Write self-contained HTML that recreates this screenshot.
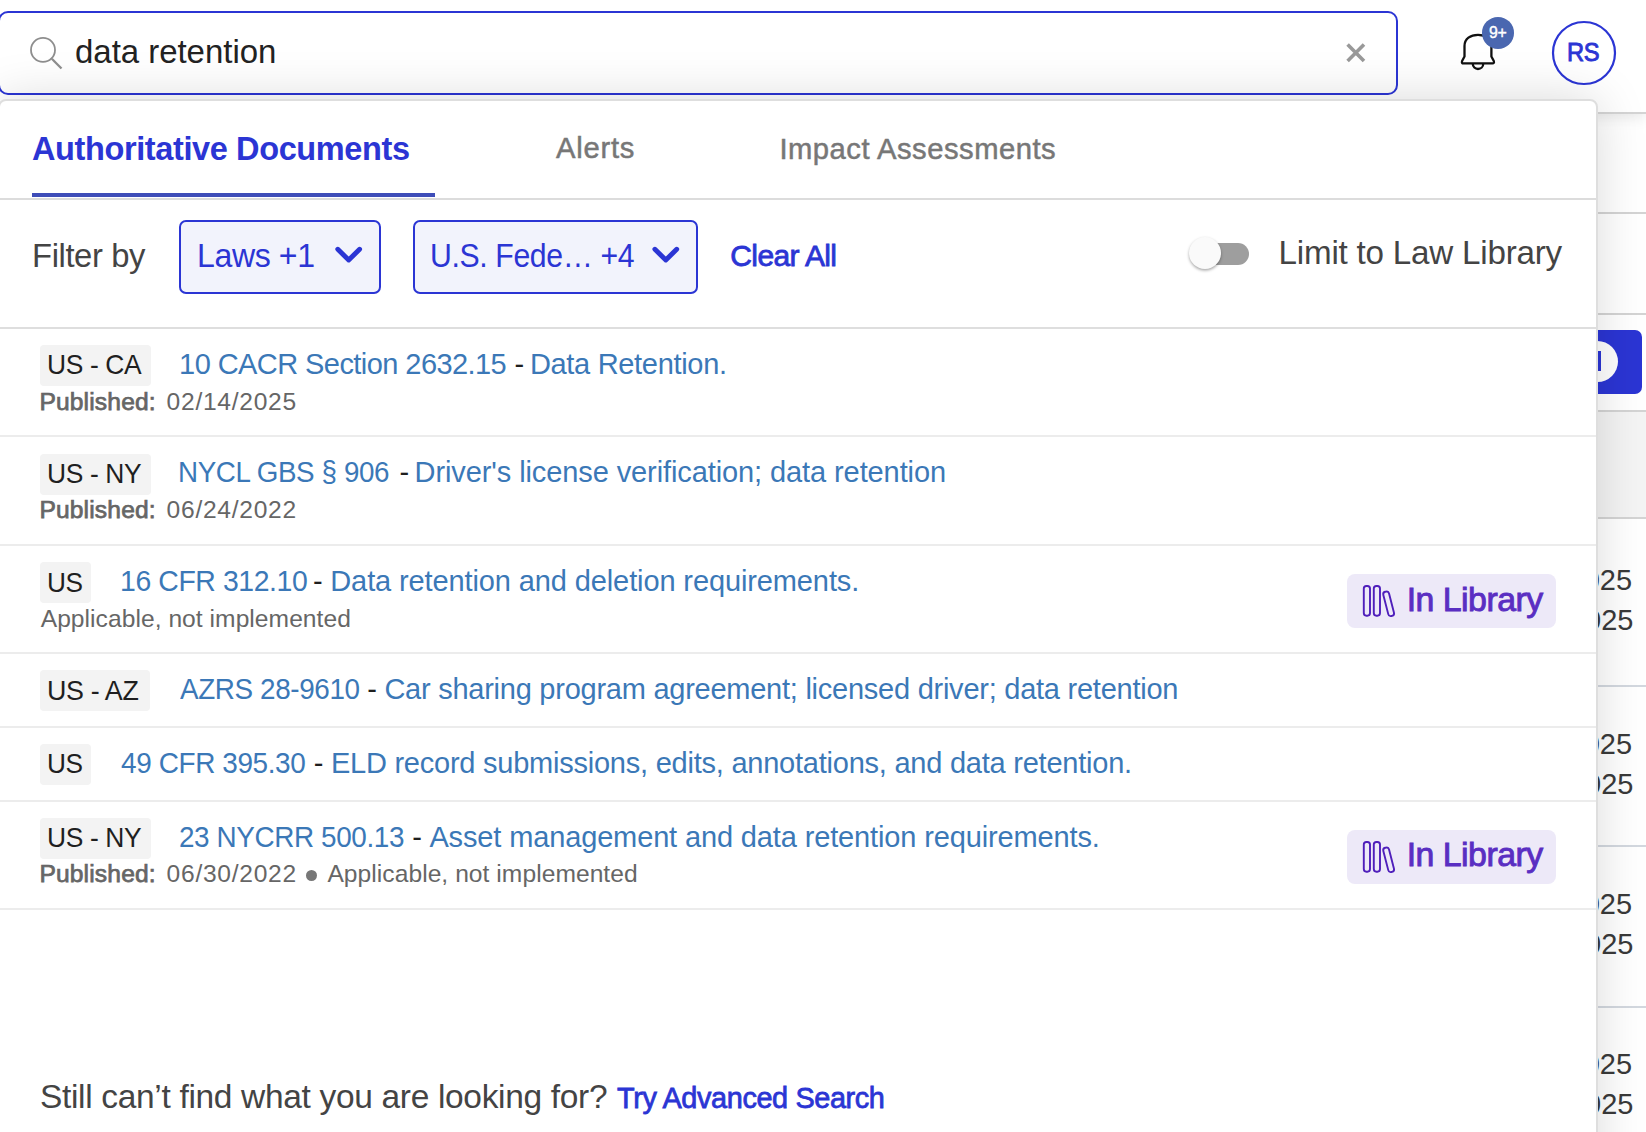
<!DOCTYPE html>
<html><head><meta charset="utf-8">
<style>
html,body{margin:0;padding:0;}
body{width:1646px;height:1132px;position:relative;overflow:hidden;background:#fff;font-family:"Liberation Sans",sans-serif;}
.a{position:absolute;}
.t{position:absolute;white-space:nowrap;line-height:1;}
.hdr{position:absolute;left:0;top:0;width:1646px;height:112px;background:#fff;border-bottom:2px solid #d3d3d3;box-shadow:0 3px 14px rgba(0,0,0,0.10);}
.search{position:absolute;left:-2.4px;top:11px;width:1395.9px;height:80px;border:2px solid #2b35d4;border-radius:10px;background:transparent;}
.page{position:absolute;left:1597px;top:114px;width:49px;height:1018px;background:#fff;}
.pline{position:absolute;left:1597px;width:49px;height:2px;background:#d4d4d4;}
.panel{position:absolute;left:-2px;top:99px;width:1600px;height:1100px;background:#fff;border:2px solid #dedede;border-radius:8px 8px 0 0;box-sizing:border-box;box-shadow:0 0 50px rgba(0,0,0,0.15);}
.hl{position:absolute;left:0;width:1596px;height:2px;background:#ececec;}
.tagbg{position:absolute;height:41px;background:#f3f3f3;border-radius:4px;}
.badge{position:absolute;left:1347px;width:209px;height:54px;background:#ede9f8;border-radius:8px;}
.dd{position:absolute;top:220.3px;height:73.5px;border:2px solid #2b35d4;border-radius:7px;background:#f2f3fc;box-sizing:border-box;}
</style></head><body>
<div class="page"></div>
<div class="hdr"></div>
<div class="pline" style="top:112px"></div>
<div class="pline" style="top:212px"></div>
<div class="pline" style="top:312.5px"></div>
<div class="a" style="left:1597px;top:411px;width:49px;height:106px;background:#f4f4f4;"></div>
<div class="pline" style="top:410px"></div>
<div class="pline" style="top:516.5px"></div>
<div class="pline" style="top:685px;background:#d3d8df"></div>
<div class="pline" style="top:845px;background:#d3d8df"></div>
<div class="pline" style="top:1005.5px;background:#d3d8df"></div>
<div class="a" style="left:1560px;top:330px;width:82px;height:64px;background:#2b35d4;border-radius:7px;"></div>
<div class="a" style="left:1577px;top:341px;width:41px;height:41px;background:#fff;border-radius:50%;"></div>
<div class="a" style="left:1598px;top:351px;width:3px;height:20px;background:#2b35d4;"></div>
<div class="t" style="left:1567.61px;top:565.85px;font-size:29px;color:#3a3a3a;">2025</div>
<div class="t" style="left:1568.91px;top:605.75px;font-size:29px;color:#3a3a3a;">2025</div>
<div class="t" style="left:1567.61px;top:730.45px;font-size:29px;color:#3a3a3a;">2025</div>
<div class="t" style="left:1568.91px;top:770.45px;font-size:29px;color:#3a3a3a;">2025</div>
<div class="t" style="left:1567.61px;top:890.45px;font-size:29px;color:#3a3a3a;">2025</div>
<div class="t" style="left:1568.91px;top:930.45px;font-size:29px;color:#3a3a3a;">2025</div>
<div class="t" style="left:1567.61px;top:1050.45px;font-size:29px;color:#3a3a3a;">2025</div>
<div class="t" style="left:1568.91px;top:1090.45px;font-size:29px;color:#3a3a3a;">2025</div>
<div class="search"></div>
<svg class="a" style="left:0;top:0" width="1646" height="113" viewBox="0 0 1646 113">
 <circle cx="43" cy="49.9" r="12" fill="none" stroke="#8e8e8e" stroke-width="1.8"/>
 <line x1="51.8" y1="58.8" x2="61.5" y2="68.5" stroke="#8e8e8e" stroke-width="2.3"/>
 <path d="M1347.6,44.6 L1364,61 M1364,44.6 L1347.6,61" stroke="#999" stroke-width="3.6"/>
 <path d="M1464.5,56.5 L1464.5,46 C1464.5,38.5 1470.5,34.8 1478,34.8 C1485.5,34.8 1491.4,38.5 1491.4,46 L1491.4,56.5 L1493.8,61 Q1494.6,63.4 1492.5,63.4 L1463.5,63.4 Q1461.3,63.4 1462.1,61 Z" fill="none" stroke="#111" stroke-width="2.3" stroke-linejoin="round"/>
 <path d="M1472.8,64 A5.2,5 0 0 0 1483.2,64" fill="none" stroke="#111" stroke-width="2.3"/>
 <circle cx="1498" cy="32.9" r="16" fill="#4a67b0"/>
 <circle cx="1584" cy="53" r="31" fill="none" stroke="#2b35d4" stroke-width="2.2"/>
</svg>
<div class="panel"></div>
<div class="a" style="left:32px;top:193px;width:403px;height:4px;background:#3e4db8;"></div>
<div class="hl" style="top:197.5px;background:#dcdcdc;"></div>
<div class="dd" style="left:179px;width:202px;"></div>
<div class="dd" style="left:413px;width:285px;"></div>
<svg class="a" style="left:0;top:0" width="1646" height="330" viewBox="0 0 1646 330">
 <path d="M337.8,249.3 L348.7,260 L359.6,249.3" fill="none" stroke="#2b35d4" stroke-width="4.9" stroke-linecap="round" stroke-linejoin="round"/>
 <path d="M654.9,249.3 L665.8,260 L676.7,249.3" fill="none" stroke="#2b35d4" stroke-width="4.9" stroke-linecap="round" stroke-linejoin="round"/>
</svg>
<div class="a" style="left:1189.5px;top:243px;width:59.5px;height:22px;border-radius:11px;background:#9e9e9e;"></div>
<div class="a" style="left:1188.5px;top:236.5px;width:32.5px;height:32.5px;border-radius:50%;background:#fafafa;box-shadow:0 1.5px 3px rgba(0,0,0,0.35);"></div>
<div class="hl" style="top:327px;background:#dedede;"></div>
<div class="hl" style="top:435px;"></div>
<div class="hl" style="top:543.5px;"></div>
<div class="hl" style="top:652px;"></div>
<div class="hl" style="top:725.5px;"></div>
<div class="hl" style="top:799.5px;"></div>
<div class="hl" style="top:907.5px;"></div>
<div class="tagbg" style="left:40px;top:345px;width:111px"></div>
<div class="tagbg" style="left:40px;top:453.5px;width:111px"></div>
<div class="tagbg" style="left:40px;top:562px;width:50.599999999999994px"></div>
<div class="badge" style="top:574px"><svg class="a" style="left:0;top:0" width="60" height="54" viewBox="0 0 60 54"><g fill="none" stroke="#4f1fbb" stroke-width="1.9"><rect x="16.8" y="12" width="6.2" height="29.7" rx="2.6"/><rect x="26.8" y="12" width="6.2" height="29.7" rx="2.6"/><rect x="38.7" y="17.3" width="5.9" height="25" rx="2.6" transform="rotate(-14.4 41.65 29.8)"/></g></svg>
</div>
<div class="tagbg" style="left:40px;top:670px;width:110px"></div>
<div class="tagbg" style="left:40px;top:743.5px;width:50.599999999999994px"></div>
<div class="tagbg" style="left:40px;top:817.5px;width:111px"></div>
<div class="badge" style="top:829.5px"><svg class="a" style="left:0;top:0" width="60" height="54" viewBox="0 0 60 54"><g fill="none" stroke="#4f1fbb" stroke-width="1.9"><rect x="16.8" y="12" width="6.2" height="29.7" rx="2.6"/><rect x="26.8" y="12" width="6.2" height="29.7" rx="2.6"/><rect x="38.7" y="17.3" width="5.9" height="25" rx="2.6" transform="rotate(-14.4 41.65 29.8)"/></g></svg>
</div>
<div class="a" style="left:306px;top:870px;width:11px;height:11px;border-radius:50%;background:#777;"></div>
<div class="t" style="left:75.00px;top:34.97px;font-size:33px;font-weight:400;letter-spacing:-0.036px;color:#222;">data retention</div>
<div class="t" style="left:1489.20px;top:24.33px;font-size:16.5px;font-weight:400;letter-spacing:-0.400px;color:#fff;-webkit-text-stroke:0.4px #fff;transform:scaleX(0.9619);transform-origin:0 0;">9+</div>
<div class="t" style="left:1567.19px;top:38.92px;font-size:26.2px;font-weight:400;letter-spacing:-0.400px;color:#2b35d4;-webkit-text-stroke:0.9px #2b35d4;transform:scaleX(0.9042);transform-origin:0 0;">RS</div>
<div class="t" style="left:32.20px;top:132.20px;font-size:33.2px;font-weight:700;letter-spacing:-0.400px;color:#2b35d4;transform:scaleX(0.9799);transform-origin:0 0;">Authoritative Documents</div>
<div class="t" style="left:556.00px;top:134.38px;font-size:29.2px;font-weight:400;letter-spacing:0.757px;color:#777;-webkit-text-stroke:0.5px #777;">Alerts</div>
<div class="t" style="left:779.40px;top:134.58px;font-size:29.2px;font-weight:400;letter-spacing:0.508px;color:#777;-webkit-text-stroke:0.5px #777;">Impact Assessments</div>
<div class="t" style="left:32.00px;top:239.83px;font-size:32.8px;font-weight:400;letter-spacing:-0.404px;color:#444;">Filter by</div>
<div class="t" style="left:197.04px;top:239.83px;font-size:32.8px;font-weight:400;letter-spacing:-0.400px;color:#2b35d4;transform:scaleX(0.9776);transform-origin:0 0;">Laws +1</div>
<div class="t" style="left:430.16px;top:239.83px;font-size:32.8px;font-weight:400;letter-spacing:-0.400px;color:#2b35d4;transform:scaleX(0.9213);transform-origin:0 0;">U.S. Fede… +4</div>
<div class="t" style="left:730.30px;top:241.21px;font-size:30px;font-weight:400;letter-spacing:-0.625px;color:#2b35d4;-webkit-text-stroke:0.8px #2b35d4;">Clear All</div>
<div class="t" style="left:1278.60px;top:235.60px;font-size:33.2px;font-weight:400;letter-spacing:-0.218px;color:#444;">Limit to Law Library</div>
<div class="t" style="left:40.00px;top:1080.24px;font-size:33.5px;font-weight:400;letter-spacing:-0.328px;color:#444;">Still can’t find what you are looking for?</div>
<div class="t" style="left:616.70px;top:1083.20px;font-size:30px;font-weight:400;letter-spacing:-0.400px;color:#2b35d4;-webkit-text-stroke:0.8px #2b35d4;transform:scaleX(0.9620);transform-origin:0 0;">Try Advanced Search</div>
<div class="t" style="left:46.93px;top:350.24px;font-size:28.3px;font-weight:400;letter-spacing:-0.400px;color:#1f1f1f;transform:scaleX(0.9338);transform-origin:0 0;">US - CA</div>
<div class="t" style="left:179.10px;top:349.65px;font-size:29px;font-weight:400;letter-spacing:-0.569px;color:#3b78b7;">10 CACR Section 2632.15</div>
<div class="t" style="left:514.50px;top:349.65px;font-size:29px;font-weight:400;letter-spacing:0.000px;color:#1f1f1f;">-</div>
<div class="t" style="left:529.90px;top:349.65px;font-size:29px;font-weight:400;letter-spacing:-0.311px;color:#3b78b7;">Data Retention.</div>
<div class="t" style="left:39.40px;top:389.68px;font-size:24.6px;font-weight:400;letter-spacing:0.154px;color:#666;-webkit-text-stroke:0.75px #666;">Published:</div>
<div class="t" style="left:166.60px;top:389.68px;font-size:24.6px;font-weight:400;letter-spacing:0.721px;color:#666;">02/14/2025</div>
<div class="t" style="left:46.93px;top:458.64px;font-size:28.3px;font-weight:400;letter-spacing:-0.400px;color:#1f1f1f;transform:scaleX(0.9338);transform-origin:0 0;">US - NY</div>
<div class="t" style="left:178.49px;top:458.05px;font-size:29px;font-weight:400;letter-spacing:-0.400px;color:#3b78b7;transform:scaleX(0.9568);transform-origin:0 0;">NYCL GBS § 906</div>
<div class="t" style="left:399.60px;top:458.05px;font-size:29px;font-weight:400;letter-spacing:0.000px;color:#1f1f1f;">-</div>
<div class="t" style="left:414.60px;top:458.05px;font-size:29px;font-weight:400;letter-spacing:-0.098px;color:#3b78b7;">Driver's license verification; data retention</div>
<div class="t" style="left:39.40px;top:498.18px;font-size:24.6px;font-weight:400;letter-spacing:0.154px;color:#666;-webkit-text-stroke:0.75px #666;">Published:</div>
<div class="t" style="left:166.60px;top:498.18px;font-size:24.6px;font-weight:400;letter-spacing:0.721px;color:#666;">06/24/2022</div>
<div class="t" style="left:46.95px;top:567.94px;font-size:28.3px;font-weight:400;letter-spacing:-0.400px;color:#1f1f1f;transform:scaleX(0.9269);transform-origin:0 0;">US</div>
<div class="t" style="left:119.94px;top:567.35px;font-size:29px;font-weight:400;letter-spacing:-0.400px;color:#3b78b7;transform:scaleX(0.9786);transform-origin:0 0;">16 CFR 312.10</div>
<div class="t" style="left:312.90px;top:567.35px;font-size:29px;font-weight:400;letter-spacing:0.000px;color:#1f1f1f;">-</div>
<div class="t" style="left:330.30px;top:567.35px;font-size:29px;font-weight:400;letter-spacing:-0.116px;color:#3b78b7;">Data retention and deletion requirements.</div>
<div class="t" style="left:40.70px;top:606.68px;font-size:24.6px;font-weight:400;letter-spacing:0.046px;color:#666;">Applicable, not implemented</div>
<div class="t" style="left:46.90px;top:675.74px;font-size:28.3px;font-weight:400;letter-spacing:-0.400px;color:#1f1f1f;transform:scaleX(0.9497);transform-origin:0 0;">US - AZ</div>
<div class="t" style="left:179.70px;top:675.15px;font-size:29px;font-weight:400;letter-spacing:-0.400px;color:#3b78b7;transform:scaleX(0.9603);transform-origin:0 0;">AZRS 28-9610</div>
<div class="t" style="left:367.30px;top:675.15px;font-size:29px;font-weight:400;letter-spacing:0.000px;color:#1f1f1f;">-</div>
<div class="t" style="left:384.40px;top:675.15px;font-size:29px;font-weight:400;letter-spacing:-0.249px;color:#3b78b7;">Car sharing program agreement; licensed driver; data retention</div>
<div class="t" style="left:46.95px;top:749.14px;font-size:28.3px;font-weight:400;letter-spacing:-0.400px;color:#1f1f1f;transform:scaleX(0.9269);transform-origin:0 0;">US</div>
<div class="t" style="left:121.40px;top:748.55px;font-size:29px;font-weight:400;letter-spacing:-0.400px;color:#3b78b7;transform:scaleX(0.9631);transform-origin:0 0;">49 CFR 395.30</div>
<div class="t" style="left:313.80px;top:748.55px;font-size:29px;font-weight:400;letter-spacing:0.000px;color:#1f1f1f;">-</div>
<div class="t" style="left:330.90px;top:748.55px;font-size:29px;font-weight:400;letter-spacing:-0.234px;color:#3b78b7;">ELD record submissions, edits, annotations, and data retention.</div>
<div class="t" style="left:46.93px;top:823.44px;font-size:28.3px;font-weight:400;letter-spacing:-0.400px;color:#1f1f1f;transform:scaleX(0.9338);transform-origin:0 0;">US - NY</div>
<div class="t" style="left:179.44px;top:822.85px;font-size:29px;font-weight:400;letter-spacing:-0.400px;color:#3b78b7;transform:scaleX(0.9610);transform-origin:0 0;">23 NYCRR 500.13</div>
<div class="t" style="left:412.30px;top:822.85px;font-size:29px;font-weight:400;letter-spacing:0.000px;color:#1f1f1f;">-</div>
<div class="t" style="left:429.40px;top:822.85px;font-size:29px;font-weight:400;letter-spacing:-0.138px;color:#3b78b7;">Asset management and data retention requirements.</div>
<div class="t" style="left:39.40px;top:862.18px;font-size:24.6px;font-weight:400;letter-spacing:0.154px;color:#666;-webkit-text-stroke:0.75px #666;">Published:</div>
<div class="t" style="left:166.60px;top:862.18px;font-size:24.6px;font-weight:400;letter-spacing:0.721px;color:#666;">06/30/2022</div>
<div class="t" style="left:327.40px;top:862.38px;font-size:24.6px;font-weight:400;letter-spacing:0.050px;color:#666;">Applicable, not implemented</div>
<div class="t" style="left:1406.70px;top:582.90px;font-size:33.9px;font-weight:400;letter-spacing:-0.525px;color:#5a2ec2;-webkit-text-stroke:0.9px #5a2ec2;">In Library</div>
<div class="t" style="left:1406.70px;top:838.40px;font-size:33.9px;font-weight:400;letter-spacing:-0.525px;color:#5a2ec2;-webkit-text-stroke:0.9px #5a2ec2;">In Library</div>
</body></html>
